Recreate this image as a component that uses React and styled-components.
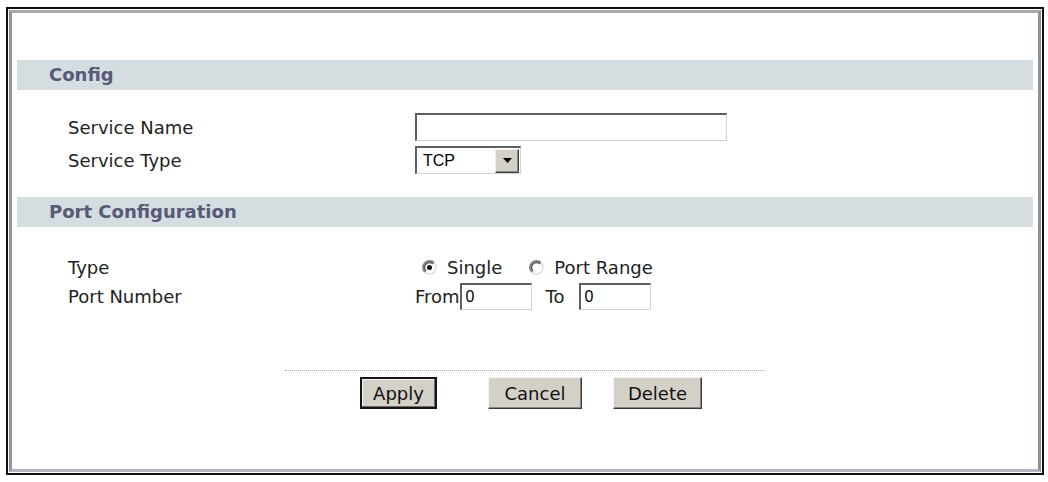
import React from "react";
import styled, { createGlobalStyle } from "styled-components";

const GlobalStyle = createGlobalStyle`
  body {
    margin: 0;
    background: #ffffff;
    font-family: "DejaVu Sans", Verdana, sans-serif;
    color: #222222;
  }
`;

const Frame = styled.div`
  box-sizing: border-box;
  width: 1038px;
  height: 468px;
  margin: 7px 0 0 6px;
  border: 2px solid #111111;
  padding: 1px;
  background: #ffffff;
`;

const Inner = styled.div`
  box-sizing: border-box;
  height: 100%;
  border: 3px solid;
  border-color: #a7a9ad #8c919b #b3b7bf #8e94a3;
  padding: 47px 5px 0 5px;
`;

const SectionBar = styled.div`
  height: 30px;
  line-height: 30px;
  padding-left: 32px;
  background: #d6dde0;
  font-size: 18px;
  font-weight: bold;
  color: #565a77;
`;

const SectionBody = styled.div`
  display: grid;
  grid-template-columns: 347px auto;
  row-gap: ${(p) => p.$gap}px;
  padding: ${(p) => p.$top}px 0 ${(p) => p.$bottom}px 51px;
`;

const Label = styled.div`
  display: flex;
  align-items: center;
  height: ${(p) => p.$h}px;
  font-size: 18px;
`;

const Control = styled.div`
  display: flex;
  align-items: center;
  height: ${(p) => p.$h}px;
  font-size: 18px;
`;

const TextInput = styled.input`
  box-sizing: border-box;
  width: ${(p) => p.$w}px;
  height: ${(p) => p.$h}px;
  margin: 0;
  margin-left: ${(p) => p.$ml || 0}px;
  padding: 0 4px;
  border-style: solid;
  border-width: 2px 1px 1px 2px;
  border-color: #5f5f5f #d2d2d2 #d2d2d2 #5f5f5f;
  background: #ffffff;
  font-family: "Liberation Sans", Arial, sans-serif;
  font-size: 16px;
  color: #000000;
  outline: none;
`;

const SelectBox = styled.div`
  box-sizing: border-box;
  display: flex;
  align-items: center;
  width: 106px;
  height: 28px;
  border-style: solid;
  border-width: 2px 1px 1px 2px;
  border-color: #5f5f5f #d2d2d2 #d2d2d2 #5f5f5f;
  background: #ffffff;
`;

const SelectValue = styled.span`
  flex: 1;
  padding-left: 6px;
  font-family: "Liberation Sans", Arial, sans-serif;
  font-size: 16px;
  color: #000000;
`;

const ArrowButton = styled.div`
  box-sizing: border-box;
  display: flex;
  align-items: center;
  justify-content: center;
  width: 24px;
  height: 24px;
  margin-right: 1px;
  background: #d4d0c8;
  border: 1px solid;
  border-color: #eeeeee #404040 #404040 #eeeeee;
  box-shadow: inset -1px -1px #8a8a8a;
`;

const RadioLabel = styled.label`
  display: flex;
  align-items: center;
  margin-left: ${(p) => p.$ml}px;
  cursor: default;
`;

const RadioText = styled.span`
  margin-left: 10px;
`;

const Word = styled.span`
  margin-left: ${(p) => p.$ml || 0}px;
`;

const Divider = styled.div`
  width: 480px;
  margin: 60px auto 0;
  border-top: 1px dotted #a9a9a9;
`;

const ButtonRow = styled.div`
  display: flex;
  padding: 6px 0 0 343px;
`;

const Button = styled.button`
  box-sizing: border-box;
  width: ${(p) => p.$w}px;
  height: 32px;
  margin: 0 0 0 ${(p) => p.$ml || 0}px;
  padding: 0;
  background: #d4d0c8;
  font-family: "DejaVu Sans", Verdana, sans-serif;
  font-size: 18px;
  color: #111111;
  border: ${(p) => (p.$default ? "2px solid #151515" : "1px solid")};
  border-color: ${(p) => (p.$default ? "#151515" : "#f4f4f4 #3a3a3a #3a3a3a #f4f4f4")};
  box-shadow: ${(p) =>
    p.$default ? "inset -1px -1px #6e6e6e, inset 1px 1px #f4f4f4" : "inset -1px -1px #858585"};
`;

const Radio = ({ checked }) => (
  <svg width="15" height="15" viewBox="0 0 15 15">
    <circle cx="7.5" cy="7.5" r="6.5" fill="#ffffff" />
    <path d="M2.9 12.1 A6.5 6.5 0 0 1 12.1 2.9" fill="none" stroke="#7e7e7e" strokeWidth="1.8" />
    <path d="M12.1 2.9 A6.5 6.5 0 0 1 2.9 12.1" fill="none" stroke="#e0e0e0" strokeWidth="1.6" />
    <path d="M4 11 A4.95 4.95 0 0 1 11 4" fill="none" stroke="#444444" strokeWidth="1.2" />
    {checked && <circle cx="7.5" cy="7.5" r="2.5" fill="#111111" />}
  </svg>
);

export default function App() {
  return (
    <>
      <GlobalStyle />
      <Frame>
        <Inner>
          <SectionBar>Config</SectionBar>
          <SectionBody $top={23} $bottom={23} $gap={5}>
            <Label $h={28}>Service Name</Label>
            <Control $h={28}>
              <TextInput $w={312} $h={28} defaultValue="" />
            </Control>
            <Label $h={28}>Service Type</Label>
            <Control $h={28}>
              <SelectBox>
                <SelectValue>TCP</SelectValue>
                <ArrowButton>
                  <svg width="9" height="5" viewBox="0 0 9 5">
                    <path d="M0 0 H9 L4.5 5 Z" fill="#000000" />
                  </svg>
                </ArrowButton>
              </SelectBox>
            </Control>
          </SectionBody>

          <SectionBar>Port Configuration</SectionBar>
          <SectionBody $top={27} $bottom={0} $gap={3}>
            <Label $h={26}>Type</Label>
            <Control $h={26}>
              <RadioLabel $ml={7}>
                <Radio checked />
                <RadioText>Single</RadioText>
              </RadioLabel>
              <RadioLabel $ml={27}>
                <Radio />
                <RadioText>Port Range</RadioText>
              </RadioLabel>
            </Control>
            <Label $h={27}>Port Number</Label>
            <Control $h={27}>
              <Word>From</Word>
              <TextInput $w={72} $h={27} defaultValue="0" />
              <Word $ml={14}>To</Word>
              <TextInput $w={72} $h={27} $ml={14} defaultValue="0" />
            </Control>
          </SectionBody>

          <Divider />
          <ButtonRow>
            <Button $w={77} $default>Apply</Button>
            <Button $w={94} $ml={51}>Cancel</Button>
            <Button $w={89} $ml={31}>Delete</Button>
          </ButtonRow>
        </Inner>
      </Frame>
    </>
  );
}
